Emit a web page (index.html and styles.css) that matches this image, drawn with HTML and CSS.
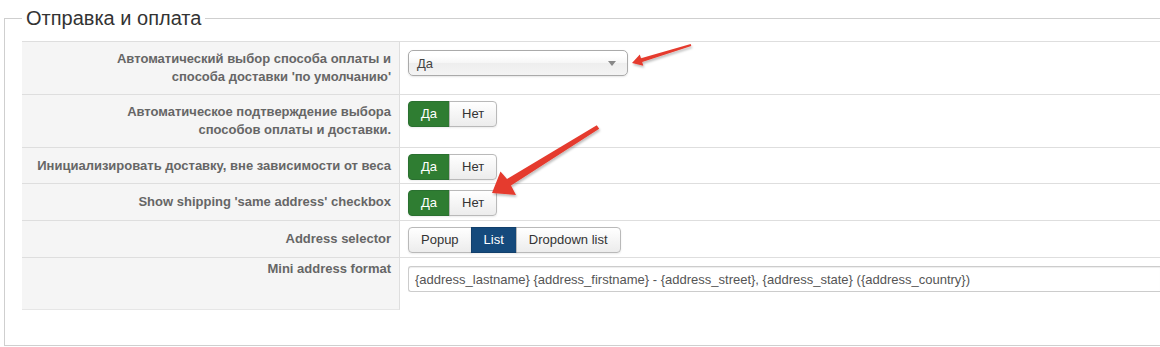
FILE: index.html
```html
<!DOCTYPE html>
<html lang="ru">
<head>
<meta charset="utf-8">
<title>Отправка и оплата</title>
<link rel="stylesheet" href="styles.css">
</head>
<body>
<fieldset class="panel">
  <legend class="panel-title">Отправка и оплата</legend>
  <div class="form">
    <div class="row">
      <div class="key">Автоматический выбор способа оплаты и<br>способа доставки 'по умолчанию'</div>
      <div class="ctl ctl-tall">
        <div class="select"><span>Да</span><span class="caret"></span></div>
      </div>
    </div>
    <div class="row">
      <div class="key">Автоматическое подтверждение выбора<br>способов оплаты и доставки.</div>
      <div class="ctl">
        <div class="btn-group"><span class="btn btn-yes">Да</span><span class="btn">Нет</span></div>
      </div>
    </div>
    <div class="row">
      <div class="key">Инициализировать доставку, вне зависимости от веса</div>
      <div class="ctl ctl-short">
        <div class="btn-group"><span class="btn btn-yes">Да</span><span class="btn">Нет</span></div>
      </div>
    </div>
    <div class="row">
      <div class="key">Show shipping 'same address' checkbox</div>
      <div class="ctl">
        <div class="btn-group"><span class="btn btn-yes">Да</span><span class="btn">Нет</span></div>
      </div>
    </div>
    <div class="row">
      <div class="key">Address selector</div>
      <div class="ctl">
        <div class="btn-group"><span class="btn">Popup</span><span class="btn btn-primary">List</span><span class="btn">Dropdown list</span></div>
      </div>
    </div>
    <div class="row row-last">
      <div class="key key-top">Mini address format</div>
      <div class="ctl ctl-tall ctl-fill">
        <input class="text-input" type="text" value="{address_lastname} {address_firstname} - {address_street}, {address_state} ({address_country})">
      </div>
    </div>
  </div>
</fieldset>

<svg class="arrows" width="1160" height="347" viewBox="0 0 1160 347" aria-hidden="true">
  <defs>
    <filter id="sh" x="-20%" y="-20%" width="140%" height="140%">
      <feDropShadow dx="1" dy="2" stdDeviation="1.2" flood-color="#000" flood-opacity="0.25"/>
    </filter>
  </defs>
  <polygon filter="url(#sh)" fill="#e53a2e" points="632,63 643.3,65.8 642.2,62 691.3,46 690.7,44 641,58.2 639.8,54.4"/>
  <polygon filter="url(#sh)" fill="#e53a2e" points="492,193 516,195 511,185.6 599.2,128.8 596.8,125.2 507,179 500.5,171.5"/>
</svg>
</body>
</html>
```

FILE: styles.css
```css
html, body {
  margin: 0;
  padding: 0;
  overflow: hidden;
  background: #fff;
}

body {
  position: relative;
  width: 1160px;
  height: 347px;
  font-family: "Liberation Sans", Arial, sans-serif;
  font-size: 13px;
  color: #333;
}

.panel {
  box-sizing: border-box;
  width: 1156px;
  margin: 6px 0 0 4px;
  padding: 11px 0 35px 17px;
  border: 1px solid #cfcfcf;
  border-right: 0;
  min-width: 0;
}

.panel-title {
  padding: 0 4px;
  font-size: 20px;
  line-height: 24px;
  color: #333;
  font-weight: normal;
}

.form {
  display: flex;
  flex-direction: column;
}

.row {
  display: flex;
  border-top: 1px solid #dedede;
}

.key {
  box-sizing: border-box;
  flex: none;
  width: 378px;
  display: flex;
  align-items: center;
  justify-content: flex-end;
  padding: 8px 8px 8px 10px;
  background: #f5f5f5;
  border-right: 1px solid #dedede;
  text-align: right;
  font-weight: bold;
  color: #666;
  line-height: 18px;
}

.key-top {
  align-items: flex-start;
  padding-top: 2px;
  min-height: 52px;
  border-bottom: 1px solid #e6e6e6;
}

.ctl {
  flex: 1;
  min-width: 0;
  padding: 6px 8px 4px;
}

.ctl-short {
  padding-bottom: 3px;
}

.ctl-tall {
  padding-top: 8px;
  padding-bottom: 8px;
}

.ctl-fill {
  padding-right: 0;
}

.btn-group {
  display: inline-flex;
}

.btn {
  box-sizing: border-box;
  height: 26px;
  line-height: 24px;
  padding: 0 12px;
  border: 1px solid #b9b9b9;
  margin-left: -1px;
  background: linear-gradient(#ffffff, #ececec);
  color: #333;
  box-shadow: 0 1px 2px rgba(0, 0, 0, 0.08);
}

.btn:first-child {
  margin-left: 0;
  border-radius: 4px 0 0 4px;
}

.btn:last-child {
  border-radius: 0 4px 4px 0;
}

.btn-yes {
  background: #2f7d32;
  border-color: #2a7030;
  color: #fff;
}

.btn-primary {
  background: #154a7c;
  border-color: #123f6b;
  color: #fff;
}

.select {
  box-sizing: border-box;
  width: 220px;
  height: 26px;
  display: flex;
  align-items: center;
  justify-content: space-between;
  padding: 0 8px;
  border: 1px solid #aaa;
  border-radius: 5px;
  background: linear-gradient(#ffffff 20%, #f6f6f6 50%, #eeeeee 52%, #f4f4f4 100%);
  box-shadow: 0 1px 2px rgba(0, 0, 0, 0.1);
  color: #444;
}

.caret {
  width: 0;
  height: 0;
  margin-right: 3px;
  border-top: 5px solid #888;
  border-left: 4px solid transparent;
  border-right: 4px solid transparent;
}

.text-input {
  box-sizing: border-box;
  display: block;
  width: 100%;
  height: 26px;
  margin: 0;
  padding: 0 6px;
  border: 1px solid #ccc;
  border-right: 0;
  border-radius: 3px 0 0 3px;
  box-shadow: inset 0 1px 1px rgba(0, 0, 0, 0.075);
  font-family: "Liberation Sans", Arial, sans-serif;
  font-size: 13px;
  color: #555;
  background: #fff;
  outline: none;
}

.arrows {
  position: absolute;
  top: 0;
  left: 0;
  pointer-events: none;
}
```
